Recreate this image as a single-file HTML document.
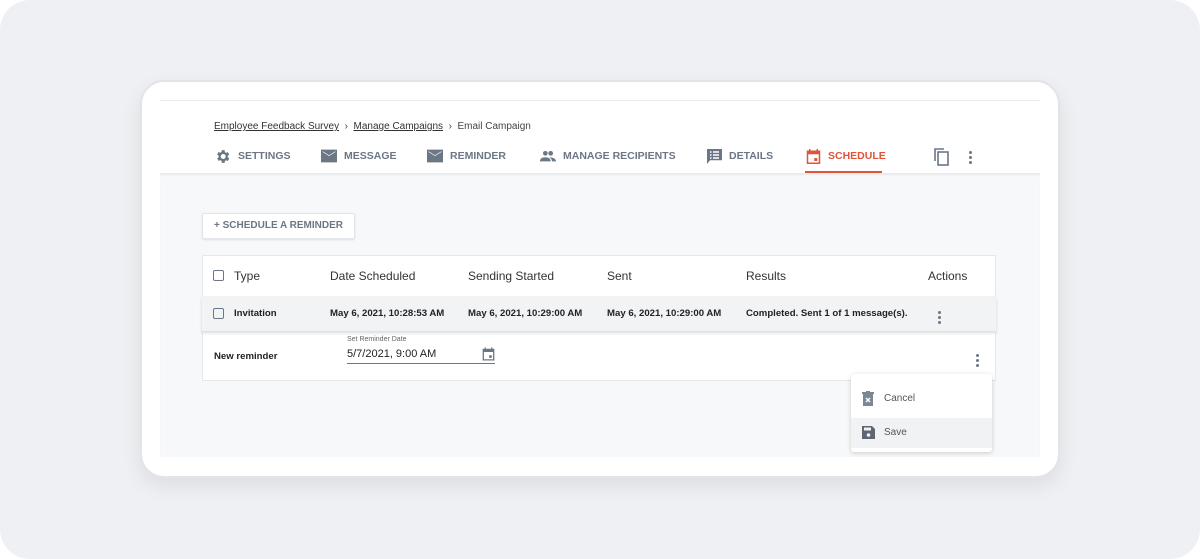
<!DOCTYPE html>
<html><head><style>
*{margin:0;padding:0;box-sizing:border-box}
body{width:1200px;height:559px;background:#fff;font-family:"Liberation Sans",sans-serif;position:relative;overflow:hidden;color:#2b2f33}
.bg{position:absolute;left:0;top:0;width:1200px;height:559px;background:#eff0f3;border-radius:30px}
.card{position:absolute;left:140px;top:80px;width:920px;height:398px;background:#fff;border-radius:24px;border:2px solid #e2e4e8;box-shadow:0 8px 20px rgba(0,0,0,.08)}
.abs{position:absolute}
.hl{left:160px;top:100px;width:880px;height:1px;background:#e8e9eb}
.content{left:160px;top:173px;width:880px;height:284px;background:#f7f8f9;box-shadow:inset 0 3px 3px -2px rgba(0,0,0,.1)}
.bc{top:121px;left:214px;font-size:10px;color:#444}
.bc u{color:#333}
.tab{top:146px;height:20px;font-size:10.5px;font-weight:bold;color:#6b7785;display:flex;align-items:center;gap:7px}
.tab svg{fill:#6b7785}
.btn{left:202px;top:213px;width:153px;height:26px;background:#fff;border:1px solid #e3e5e8;box-shadow:0 1px 2px rgba(0,0,0,.1);font-size:10px;font-weight:bold;color:#6b7785;text-align:center;line-height:24px;border-radius:2px}
.tbl{left:202px;top:255px;width:794px;height:126px;background:#fff;border:1px solid #e6e7ea}
.th{font-size:12px;color:#333;top:269px}
.r1{left:202px;top:296px;width:794px;height:35px;background:#f1f3f4;box-shadow:0 2px 3px rgba(0,0,0,.15)}
.td{font-size:9.6px;font-weight:bold;color:#222;top:308px}
.cb{width:11px;height:11px;border:1.5px solid #6b7785;border-radius:2px}
.dots{width:3px}
.dots i{display:block;width:3px;height:3px;border-radius:50%;background:#6b7785;margin-bottom:2px}
.menu{left:851px;top:374px;width:141px;height:78px;background:#fff;border-radius:3px;box-shadow:0 1px 5px rgba(0,0,0,.18)}
</style></head><body>
<div class="bg"></div>
<div class="card"></div>
<div class="abs hl"></div>
<div class="abs content"></div>
<div class="abs bc"><u>Employee Feedback Survey</u> &nbsp;›&nbsp; <u>Manage Campaigns</u> &nbsp;›&nbsp; Email Campaign</div>

<div class="abs tab" style="left:214px"><svg width="17" height="17" viewBox="0 0 24 24"><path d="M19.4 13a7.5 7.5 0 000-2l2.1-1.6-2-3.5-2.5 1a7 7 0 00-1.7-1L15 3h-4l-.4 2.7a7 7 0 00-1.7 1l-2.5-1-2 3.5L6.6 11a7.5 7.5 0 000 2l-2.1 1.6 2 3.5 2.5-1a7 7 0 001.7 1L11 21h4l.4-2.7a7 7 0 001.7-1l2.5 1 2-3.5zM13 15.5a3.5 3.5 0 110-7 3.5 3.5 0 010 7z"/></svg>SETTINGS</div>
<div class="abs tab" style="left:321px"><svg width="16" height="14" viewBox="0 0 20 16"><path d="M0 0h20v16H0zM2 3l8 5 8-5V2l-8 5-8-5z"/></svg>MESSAGE</div>
<div class="abs tab" style="left:427px"><svg width="16" height="14" viewBox="0 0 20 16"><path d="M0 0h20v16H0zM2 3l8 5 8-5V2l-8 5-8-5z"/></svg>REMINDER</div>
<div class="abs tab" style="left:540px"><svg width="16" height="12" viewBox="0 0 24 16"><circle cx="8" cy="4" r="3.5"/><circle cx="16" cy="4" r="3.5"/><path d="M0 16c0-5 4-6 8-6s8 1 8 6zM14 10c4 0 10 1 10 6h-6c0-3-2-5-4-6z"/></svg>MANAGE RECIPIENTS</div>
<div class="abs tab" style="left:707px"><svg width="15" height="15" viewBox="0 0 20 20"><path d="M0 0h20v15H4l-4 5zM4 3v2h2V3zm4 0v2h8V3zM4 7v2h2V7zm4 0v2h8V7zM4 11v2h2v-2zm4 0v2h8v-2z" fill-rule="evenodd"/></svg>DETAILS</div>
<div class="abs tab" style="left:806px;color:#e0553a"><svg width="15" height="15" viewBox="0 0 20 20" style="fill:#e0553a"><path d="M4 0h2v2h8V0h2v2h3v18H1V2h3zM3 7v11h14V7zm8 5h4v4h-4z" fill-rule="evenodd"/></svg>SCHEDULE</div>
<div class="abs" style="left:805px;top:171px;width:77px;height:2px;background:#e0553a"></div>
<svg class="abs" style="left:934px;top:148px" width="16" height="18" viewBox="0 0 16 18"><path d="M1 13V1h9" stroke="#6b7785" stroke-width="1.6" fill="none"/><rect x="4" y="4" width="10" height="13" stroke="#6b7785" stroke-width="1.6" fill="none"/></svg>
<div class="abs dots" style="left:969px;top:151px"><i></i><i></i><i></i></div>

<div class="abs btn">+ SCHEDULE A REMINDER</div>

<div class="abs tbl"></div>
<div class="abs cb" style="left:213px;top:270px"></div>
<div class="abs th" style="left:234px">Type</div>
<div class="abs th" style="left:330px">Date Scheduled</div>
<div class="abs th" style="left:468px">Sending Started</div>
<div class="abs th" style="left:607px">Sent</div>
<div class="abs th" style="left:746px">Results</div>
<div class="abs th" style="left:928px">Actions</div>

<div class="abs r1"></div>
<div class="abs cb" style="left:213px;top:308px"></div>
<div class="abs td" style="left:234px">Invitation</div>
<div class="abs td" style="left:330px">May 6, 2021, 10:28:53 AM</div>
<div class="abs td" style="left:468px">May 6, 2021, 10:29:00 AM</div>
<div class="abs td" style="left:607px">May 6, 2021, 10:29:00 AM</div>
<div class="abs td" style="left:746px">Completed. Sent 1 of 1 message(s).</div>
<div class="abs dots" style="left:938px;top:311px"><i></i><i></i><i></i></div>

<div class="abs td" style="left:214px;top:351px">New reminder</div>
<div class="abs" style="left:347px;top:336px;font-size:7px;color:#666">Set Reminder Date</div>
<div class="abs" style="left:347px;top:348px;font-size:11px;color:#222">5/7/2021, 9:00 AM</div>
<div class="abs" style="left:347px;top:363px;width:148px;height:1px;background:#6b7785"></div>
<svg class="abs" style="left:482px;top:347px" width="13" height="14" viewBox="0 0 20 20"><path d="M4 0h2v2h8V0h2v2h3v18H1V2h3zM3 7v11h14V7zm8 5h4v4h-4z" fill="#6b7785" fill-rule="evenodd"/></svg>
<div class="abs dots" style="left:976px;top:354px"><i></i><i></i><i></i></div>

<div class="abs menu"></div>
<div class="abs" style="left:851px;top:418px;width:141px;height:30px;background:#f1f2f3"></div>
<svg class="abs" style="left:862px;top:391px" width="12" height="15" viewBox="0 0 12 15"><path d="M0 1h12v2H0zM4 0h4v1H4zM1 3h10v12H1z" fill="#7b8794"/><path d="M4 7l4 4M8 7l-4 4" stroke="#fff" stroke-width="1.4"/></svg>
<div class="abs" style="left:884px;top:393px;font-size:10px;color:#555">Cancel</div>
<svg class="abs" style="left:862px;top:426px" width="13" height="13" viewBox="0 0 13 13"><path d="M0 0h10l3 3v10H0z" fill="#5c6773"/><rect x="2" y="1.5" width="7" height="3" fill="#f1f2f3"/><circle cx="6.5" cy="9" r="1.8" fill="#f1f2f3"/></svg>
<div class="abs" style="left:884px;top:427px;font-size:10px;color:#555">Save</div>
</body></html>
